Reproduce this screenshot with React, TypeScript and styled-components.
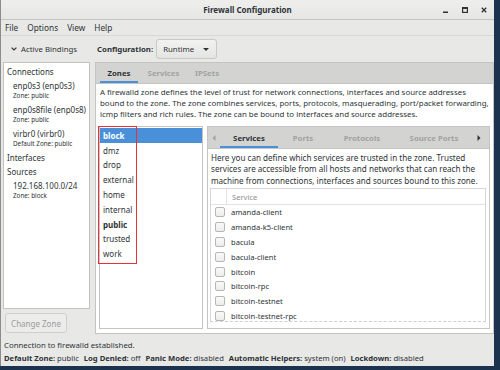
import React from "react";
import styled, { createGlobalStyle } from "styled-components";

const Global = createGlobalStyle`
  html, body { margin: 0; padding: 0; background: #1c3350; }
  body { font-family: "Noto Sans", "Open Sans", sans-serif; color: #2e3436; }
  #root { width: 500px; height: 370px; }
  * { box-sizing: border-box; }
`;

const Window = styled.div`
  width: 494px;
  height: 366px;
  background: #e8e8e7;
  border-left: 1px solid #8c8c8c;
  display: flex;
  flex-direction: column;
  font-size: 7.8px;
  overflow: hidden;
  white-space: nowrap;
`;

const TitleBar = styled.div`
  height: 20px;
  flex: none;
  position: relative;
  display: flex;
  align-items: center;
  justify-content: center;
  background: linear-gradient(#eeeeed, #e6e6e5);
  border-bottom: 1px solid #c4c4c2;
  font-weight: 700;
  font-size: 8px;
`;

const Controls = styled.div`
  position: absolute;
  right: 5px;
  top: 0;
  height: 19px;
  display: flex;
  align-items: center;
  gap: 9px;
`;

const Ctl = styled.span`
  width: 10px;
  display: flex;
  justify-content: center;
  align-items: center;
`;

const MenuBar = styled.div`
  height: 16px;
  flex: none;
  display: flex;
  align-items: center;
  gap: 9px;
  padding-left: 4px;
  border-bottom: 1px solid #d8d8d6;
  font-size: 8.3px;
`;

const Main = styled.div`
  flex: 1;
  display: flex;
  min-height: 0;
`;

const LeftPane = styled.div`
  width: 93px;
  flex: none;
  display: flex;
  flex-direction: column;
  padding: 0 4px 4px 2px;
`;

const PaneHeader = styled.div`
  height: 26px;
  display: flex;
  align-items: center;
  gap: 4px;
  padding-left: 8px;
  font-size: 7.8px;
`;

const Bindings = styled.div`
  flex: 1;
  background: #fff;
  border: 1px solid #c2c2c0;
  padding: 1px 1px 0 2px;
  overflow: hidden;
`;

const TreeHead = styled.div`
  font-size: 8px;
  height: 14px;
  display: flex;
  align-items: center;
  padding-left: 1px;
`;

const TreeItem = styled.div`
  padding: 2px 0 2px 7px;
`;

const ItemName = styled.div`
  font-size: 8px;
  line-height: 11px;
`;

const ItemSub = styled.div`
  font-size: 6.3px;
  line-height: 9px;
`;

const Button = styled.div`
  margin-top: 4px;
  margin-left: 2px;
  width: 62px;
  height: 20px;
  border: 1px solid #cfcfcd;
  border-radius: 3px;
  background: #ececeb;
  color: #9a9c99;
  font-size: 8px;
  display: flex;
  align-items: center;
  justify-content: center;
`;

const RightPane = styled.div`
  flex: 1;
  display: flex;
  flex-direction: column;
  padding: 0 2px 3px 1px;
`;

const ConfigRow = styled.div`
  height: 26px;
  display: flex;
  align-items: center;
  gap: 3px;
  padding-left: 2px;
  font-size: 7.8px;
`;

const Bold = styled.span`
  font-weight: 700;
`;

const Combo = styled.div`
  width: 61px;
  height: 20px;
  border: 1px solid #c8c8c6;
  border-radius: 3px;
  background: linear-gradient(#f2f2f1, #e4e4e3);
  display: flex;
  align-items: center;
  justify-content: space-between;
  padding: 0 7px 0 6px;
`;

const Caret = styled.span`
  width: 0;
  height: 0;
  border-left: 3px solid transparent;
  border-right: 3px solid transparent;
  border-top: 3px solid #2e3436;
`;

const Notebook = styled.div`
  flex: 1;
  display: flex;
  flex-direction: column;
  border: 1px solid #c4c4c2;
  background: #fff;
  min-height: 0;
`;

const TabBar = styled.div<{ $h: number }>`
  height: ${(p) => p.$h}px;
  flex: none;
  background: #d3d3d2;
  border-bottom: 1px solid #c4c4c2;
  display: flex;
  align-items: stretch;
`;

const Tab = styled.div<{ $active?: boolean; $w: number }>`
  width: ${(p) => p.$w}px;
  display: flex;
  align-items: center;
  justify-content: center;
  font-weight: 700;
  font-size: 7.8px;
  color: ${(p) => (p.$active ? "#2e3436" : "#a1a3a0")};
  border-bottom: 2px solid ${(p) => (p.$active ? "#4a90d9" : "transparent")};
  padding-top: 2px;
`;

const Arrow = styled.div<{ $w: number }>`
  width: ${(p) => p.$w}px;
  display: flex;
  align-items: center;
  justify-content: center;
`;

const Desc = styled.div`
  padding: 3px 4px 0 4px;
  line-height: 11px;
  height: 42px;
  flex: none;
  font-size: 7.9px;
`;

const ZoneArea = styled.div`
  flex: 1;
  display: flex;
  gap: 4px;
  padding: 0 3px 4px 3px;
  min-height: 0;
`;

const ZoneList = styled.div`
  width: 104px;
  flex: none;
  border: 1px solid #c4c4c2;
  padding-top: 1px;
  position: relative;
`;

const ZoneItem = styled.div<{ $sel?: boolean; $bold?: boolean }>`
  height: 14.8px;
  display: flex;
  align-items: center;
  padding-left: 3px;
  font-size: 8px;
  font-weight: ${(p) => (p.$sel || p.$bold ? 700 : 400)};
  background: ${(p) => (p.$sel ? "#4a90d9" : "transparent")};
  color: ${(p) => (p.$sel ? "#fff" : "#2e3436")};
`;

const RedBox = styled.div`
  position: absolute;
  left: -2px;
  top: -1px;
  width: 39px;
  height: 138px;
  border: 1.5px solid #e5323a;
  pointer-events: none;
`;

const Inner = styled.div`
  flex: 1;
  display: flex;
  flex-direction: column;
  border: 1px solid #c4c4c2;
  min-width: 0;
`;

const Help = styled.div`
  padding: 3px 3px 0 3px;
  line-height: 11.3px;
  height: 39px;
  flex: none;
  font-size: 8.1px;
`;

const Table = styled.div`
  margin: 0 3px 6px 2px;
  flex: 1;
  border: 1px solid #d6d6d4;
  border-bottom: 1px dashed #cfcfcd;
  overflow: hidden;
`;

const Header = styled.div`
  height: 16px;
  display: flex;
  border-bottom: 1px solid #e2e2e0;
  color: #8d8f8c;
  font-size: 7.6px;
`;

const HeadSpacer = styled.div`
  width: 16px;
  border-right: 1px solid #e2e2e0;
`;

const HeadCell = styled.div`
  display: flex;
  align-items: center;
  padding-left: 5px;
`;

const Row = styled.div`
  height: 14.8px;
  display: flex;
  align-items: center;
  gap: 6px;
  padding-left: 4px;
  font-size: 7.6px;
`;

const Check = styled.span`
  width: 10px;
  height: 10px;
  border: 1px solid #b6b6b3;
  border-radius: 2px;
  background: linear-gradient(#fafafa, #ececeb);
`;

const StatusLine = styled.div`
  height: 14px;
  flex: none;
  display: flex;
  align-items: center;
  padding-left: 3px;
  padding-top: 2px;
  font-size: 7.8px;
`;

const StatusBar = styled.div`
  height: 15px;
  flex: none;
  display: flex;
  align-items: center;
  gap: 5px;
  padding-left: 3px;
  padding-bottom: 1px;
  font-size: 7.65px;
`;

const zones = ["block", "dmz", "drop", "external", "home", "internal", "public", "trusted", "work"];
const services = [
  "amanda-client",
  "amanda-k5-client",
  "bacula",
  "bacula-client",
  "bitcoin",
  "bitcoin-rpc",
  "bitcoin-testnet",
  "bitcoin-testnet-rpc",
];

export default function App() {
  return (
    <>
      <Global />
      <Window>
        <TitleBar>
          Firewall Configuration
          <Controls>
            <Ctl>
              <svg width="6" height="6" viewBox="0 0 6 6">
                <rect x="0" y="4.5" width="5" height="1.5" fill="#2e3436" />
              </svg>
            </Ctl>
            <Ctl>
              <svg width="6" height="6" viewBox="0 0 6 6">
                <rect x="0.6" y="0.6" width="4.8" height="4.8" fill="none" stroke="#2e3436" strokeWidth="1.2" />
                <rect x="0.6" y="0.6" width="4.8" height="1.4" fill="#2e3436" />
              </svg>
            </Ctl>
            <Ctl>
              <svg width="6" height="6" viewBox="0 0 6 6">
                <path d="M0.8 0.8 L5.2 5.2 M5.2 0.8 L0.8 5.2" stroke="#2e3436" strokeWidth="1.3" />
              </svg>
            </Ctl>
          </Controls>
        </TitleBar>
        <MenuBar>
          <span>File</span>
          <span>Options</span>
          <span>View</span>
          <span>Help</span>
        </MenuBar>
        <Main>
          <LeftPane>
            <PaneHeader>
              <svg width="6" height="4" viewBox="0 0 6 4">
                <path d="M0.6 0.6 L3 3 L5.4 0.6" fill="none" stroke="#2e3436" strokeWidth="1.2" />
              </svg>
              Active Bindings
            </PaneHeader>
            <Bindings>
              <TreeHead>Connections</TreeHead>
              <TreeItem>
                <ItemName>enp0s3 (enp0s3)</ItemName>
                <ItemSub>Zone: public</ItemSub>
              </TreeItem>
              <TreeItem>
                <ItemName>enp0s8file (enp0s8)</ItemName>
                <ItemSub>Zone: public</ItemSub>
              </TreeItem>
              <TreeItem>
                <ItemName>virbr0 (virbr0)</ItemName>
                <ItemSub>Default Zone: public</ItemSub>
              </TreeItem>
              <TreeHead>Interfaces</TreeHead>
              <TreeHead>Sources</TreeHead>
              <TreeItem>
                <ItemName>192.168.100.0/24</ItemName>
                <ItemSub>Zone: block</ItemSub>
              </TreeItem>
            </Bindings>
            <Button>Change Zone</Button>
          </LeftPane>
          <RightPane>
            <ConfigRow>
              <Bold>Configuration:</Bold>
              <Combo>
                <span>Runtime</span>
                <Caret />
              </Combo>
            </ConfigRow>
            <Notebook>
              <TabBar $h={21}>
                <Arrow $w={4} />
                <Tab $active $w={38}>Zones</Tab>
                <Tab $w={51}>Services</Tab>
                <Tab $w={36}>IPSets</Tab>
              </TabBar>
              <Desc>
                A firewalld zone defines the level of trust for network connections, interfaces and source addresses
                <br />
                bound to the zone. The zone combines services, ports, protocols, masquerading, port/packet forwarding,
                <br />
                icmp filters and rich rules. The zone can be bound to interfaces and source addresses.
              </Desc>
              <ZoneArea>
                <ZoneList>
                  {zones.map((z, i) => (
                    <ZoneItem key={z} $sel={i === 0} $bold={z === "public"}>
                      {z}
                    </ZoneItem>
                  ))}
                  <RedBox />
                </ZoneList>
                <Inner>
                  <TabBar $h={22}>
                    <Arrow $w={12}>
                      <svg width="4" height="6" viewBox="0 0 4 6">
                        <path d="M3.5 0 L0.5 3 L3.5 6Z" fill="#a1a3a0" />
                      </svg>
                    </Arrow>
                    <Tab $active $w={58}>Services</Tab>
                    <Tab $w={50}>Ports</Tab>
                    <Tab $w={68}>Protocols</Tab>
                    <Tab $w={76}>Source Ports</Tab>
                    <Arrow $w={14}>
                      <svg width="4" height="6" viewBox="0 0 4 6">
                        <path d="M0.5 0 L3.5 3 L0.5 6Z" fill="#2e3436" />
                      </svg>
                    </Arrow>
                  </TabBar>
                  <Help>
                    Here you can define which services are trusted in the zone. Trusted
                    <br />
                    services are accessible from all hosts and networks that can reach the
                    <br />
                    machine from connections, interfaces and sources bound to this zone.
                  </Help>
                  <Table>
                    <Header>
                      <HeadSpacer />
                      <HeadCell>Service</HeadCell>
                    </Header>
                    {services.map((s) => (
                      <Row key={s}>
                        <Check />
                        {s}
                      </Row>
                    ))}
                  </Table>
                </Inner>
              </ZoneArea>
            </Notebook>
          </RightPane>
        </Main>
        <StatusLine>Connection to firewalld established.</StatusLine>
        <StatusBar>
          <span>
            <Bold>Default Zone:</Bold> public
          </span>
          <span>
            <Bold>Log Denied:</Bold> off
          </span>
          <span>
            <Bold>Panic Mode:</Bold> disabled
          </span>
          <span>
            <Bold>Automatic Helpers:</Bold> system (on)
          </span>
          <span>
            <Bold>Lockdown:</Bold> disabled
          </span>
        </StatusBar>
      </Window>
    </>
  );
}
